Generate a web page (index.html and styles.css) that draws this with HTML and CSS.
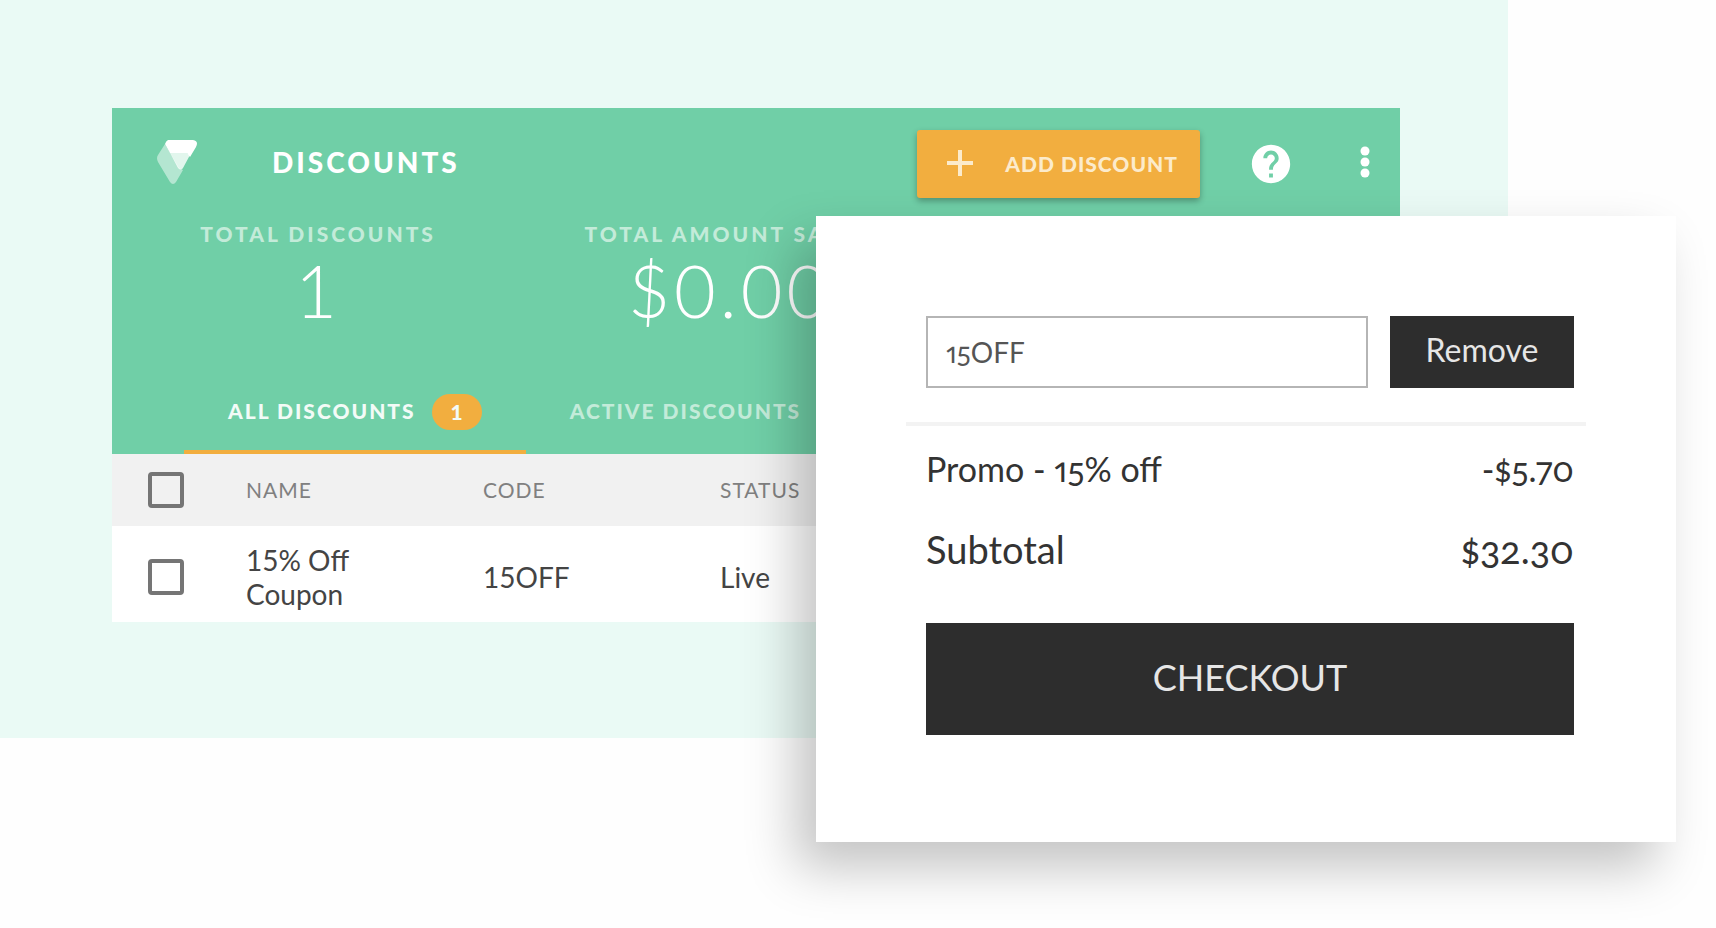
FILE: index.html
```
<!DOCTYPE html>
<html lang="en">
<head>
    <meta charset="UTF-8">
    <meta name="viewport" content="width=device-width, initial-scale=1.0">
    <title>Discounts</title>
    <link rel="stylesheet" href="styles.css">
</head>
<body>
<main class="scene">
    <section class="admin">
        <header class="admin-header">
            <div class="topbar">
                <svg class="logo" viewBox="0 0 40 44" aria-hidden="true">
                    <path d="M8 4 L1 15 Q-1 18 1 22 L13 42 Q16 46 19 42 L26 30 L22 28 Z" fill="#fff" fill-opacity=".48"/>
                    <path d="M8 4 L13 13 H30 L33 15 L26 28 Q24 31 21 28 L13 13 Z" fill="#fff" fill-opacity=".8"/>
                    <path d="M11 0 H36 Q42 1 39 7 L33 17 L30 13 H13 L8 4 Q9 1 11 0 Z" fill="#fff"/>
                </svg>
                <h1>DISCOUNTS</h1>
                <button class="add-btn" type="button">
                    <svg width="26" height="26" viewBox="0 0 26 26" aria-hidden="true">
                        <path d="M13 0 V26 M0 13 H26" stroke="currentColor" stroke-width="4"/>
                    </svg>
                    ADD DISCOUNT
                </button>
                <button class="icon-btn" type="button" aria-label="Help">
                    <svg width="46" height="46" viewBox="0 0 24 24" fill="currentColor">
                        <path d="M12 2C6.48 2 2 6.48 2 12s4.48 10 10 10 10-4.48 10-10S17.52 2 12 2zm1 17h-2v-2h2v2zm2.07-7.75l-.9.92C13.45 12.9 13 13.5 13 15h-2v-.5c0-1.1.45-2.1 1.17-2.83l1.24-1.26c.37-.36.59-.86.59-1.41 0-1.1-.9-2-2-2s-2 .9-2 2H8c0-2.21 1.79-4 4-4s4 1.79 4 4c0 .88-.36 1.68-.93 2.25z"/>
                    </svg>
                </button>
                <button class="icon-btn" type="button" aria-label="More">
                    <svg width="46" height="46" viewBox="0 0 46 46" fill="currentColor">
                        <circle cx="23" cy="10" r="4.5"/>
                        <circle cx="23" cy="21" r="4.5"/>
                        <circle cx="23" cy="32" r="4.5"/>
                    </svg>
                </button>
            </div>

            <div class="stats">
                <div class="stat">
                    <div class="stat-label">TOTAL DISCOUNTS</div>
                    <div class="stat-value">1</div>
                </div>
                <div class="stat">
                    <div class="stat-label">TOTAL AMOUNT SAVED</div>
                    <div class="stat-value">$0.00</div>
                </div>
            </div>

            <nav class="tabs">
                <a href="#" class="tab active">ALL DISCOUNTS <span class="badge">1</span></a>
                <a href="#" class="tab">ACTIVE DISCOUNTS</a>
            </nav>
        </header>

        <table class="discounts">
            <thead>
                <tr>
                    <th class="check-col"><input type="checkbox" aria-label="Select all"></th>
                    <th class="data-col">NAME</th>
                    <th class="data-col">CODE</th>
                    <th>STATUS</th>
                </tr>
            </thead>
            <tbody>
                <tr>
                    <td><input type="checkbox" aria-label="Select 15% Off Coupon"></td>
                    <td class="name">15% Off Coupon</td>
                    <td>15OFF</td>
                    <td>Live</td>
                </tr>
            </tbody>
        </table>
    </section>
</main>

<!-- cart card, floats over the admin panel -->
<section class="cart">
    <form class="promo-form">
        <input type="text" class="promo-input" value="15OFF" aria-label="Discount code">
        <button type="button" class="remove-btn">Remove</button>
    </form>
    <div class="totals">
        <div class="total-row promo"><span>Promo - 15% off</span><span>-$5.70</span></div>
        <div class="total-row subtotal"><span>Subtotal</span><span>$32.30</span></div>
        <button type="button" class="checkout-btn">CHECKOUT</button>
    </div>
</section>
</body>
</html>
```
FILE: styles.css
```
* {
    box-sizing: border-box;
}
html {
    background: #fefefe;
}
body {
    margin: 0;
    position: relative;
    min-height: 100vh;
    font-family: Lato, sans-serif;
}
button {
    font-family: inherit;
    border: none;
    cursor: pointer;
}
.scene {
    margin-right: 208px;
    padding: 108px 108px 116px 112px;
    background: #eafaf5;
}

/* admin panel */
.admin-header {
    background: #70cfa7;
    color: #fff;
}
.topbar {
    display: flex;
    align-items: center;
    padding: 22px 12px 22px 45px;
}
.logo {
    width: 40px;
    height: 44px;
    margin-bottom: 4px;
}
h1 {
    flex: 1;
    margin: 0 0 4px 75px;
    font-size: 28px;
    line-height: 34px;
    font-weight: 900;
    letter-spacing: 3px;
}
.add-btn {
    display: flex;
    align-items: center;
    gap: 32px;
    height: 68px;
    padding: 0 22px 2px 30px;
    margin-right: 48px;
    border-radius: 3px;
    background: #f2ae3f;
    color: #fcebcb;
    font-size: 21px;
    font-weight: 900;
    letter-spacing: 1px;
    box-shadow: 0 3px 6px rgba(0, 0, 0, 0.3);
}
.icon-btn {
    display: flex;
    padding: 0;
    background: none;
    color: #fff;
}
.icon-btn + .icon-btn {
    margin-left: 48px;
}
.stats {
    display: flex;
    padding-bottom: 44px;
}
.stat {
    width: 32%;
    text-align: center;
}
.stat-label {
    font-size: 21px;
    line-height: 28px;
    font-weight: 900;
    letter-spacing: 3px;
    color: #c3ebd9;
}
.stat-value {
    margin-top: 6px;
    font-size: 72px;
    line-height: 72px;
    font-weight: 300;
    letter-spacing: 4px;
}
.tabs {
    display: flex;
    padding-left: 72px;
}
.tab {
    display: flex;
    align-items: center;
    gap: 16px;
    height: 84px;
    padding: 0 44px;
    border-bottom: 4px solid transparent;
    color: #c3ebd9;
    font-size: 21px;
    font-weight: 900;
    letter-spacing: 2px;
    text-decoration: none;
    white-space: nowrap;
}
.tab.active {
    color: #f3fbf7;
    border-color: #f2ae3f;
}
.badge {
    width: 50px;
    margin-top: 4px;
    border-radius: 18px;
    background: #f2ae3f;
    line-height: 36px;
    letter-spacing: 0;
    text-align: center;
}
.discounts {
    width: 100%;
    border-collapse: collapse;
    table-layout: fixed;
    background: #fff;
    color: #444;
    font-size: 28px;
    line-height: 34px;
}
.discounts th,
.discounts td {
    padding: 0;
    text-align: left;
}
.discounts th {
    height: 72px;
    background: #f1f1f1;
    color: #808080;
    font-size: 21px;
    font-weight: 400;
    letter-spacing: 1px;
}
.discounts td {
    height: 96px;
    padding-top: 6px;
}
.check-col {
    width: 134px;
}
.data-col {
    width: 237px;
}
.discounts .name {
    padding-right: 100px;
}
.discounts input {
    appearance: none;
    display: block;
    width: 36px;
    height: 36px;
    margin: 0 0 0 36px;
    border: 4px solid #757575;
    border-radius: 4px;
}

/* cart */
.cart {
    position: absolute;
    top: 216px;
    right: 40px;
    width: calc(50% + 2px);
    padding: 100px 90px 107px;
    background: #fff;
    color: #333;
    box-shadow: -20px 26px 48px rgba(0, 0, 0, 0.23);
    font-variant-numeric: oldstyle-nums proportional-nums;
}
.promo-form {
    display: flex;
    gap: 22px;
    padding: 0 12px 34px 20px;
    border-bottom: 4px solid #f3f3f3;
}
.promo-input {
    flex: 1;
    min-width: 0;
    height: 72px;
    padding: 0 18px;
    border: 2px solid #b5b5b5;
    color: #555;
    font: inherit;
    font-size: 28px;
    font-variant-numeric: inherit;
}
.remove-btn {
    width: 184px;
    padding-bottom: 6px;
    background: #2d2d2d;
    color: #e6e6e6;
    font-size: 32px;
}
.totals {
    padding: 21px 12px 0 20px;
}
.total-row {
    display: flex;
    justify-content: space-between;
    line-height: 44px;
}
.promo {
    font-size: 34px;
}
.subtotal {
    margin-top: 36px;
    font-size: 38px;
}
.checkout-btn {
    width: 100%;
    height: 112px;
    margin-top: 52px;
    padding-bottom: 6px;
    background: #2d2d2d;
    color: #e6e6e6;
    font-size: 36px;
}
```
